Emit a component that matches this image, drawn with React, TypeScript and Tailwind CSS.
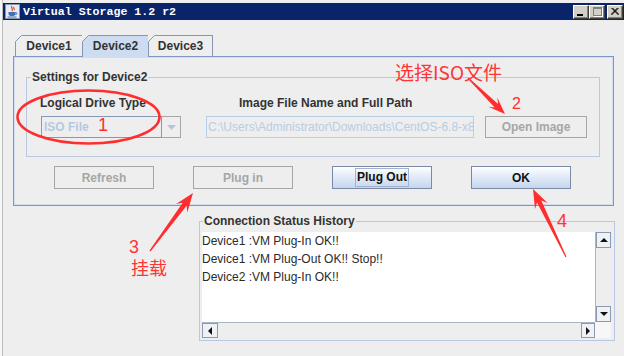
import React from 'react'

type Pt = [number, number]

// tapered annotation arrow, tail -> tip
function arrowPoints(tail: Pt, tip: Pt, head = 18, hw = 7, tw = 0.6, sw = 2.4) {
  const [x1, y1] = tail
  const [x2, y2] = tip
  const len = Math.hypot(x2 - x1, y2 - y1)
  const ux = (x2 - x1) / len
  const uy = (y2 - y1) / len
  const px = -uy
  const py = ux
  const bx = x2 - ux * head
  const by = y2 - uy * head
  const nx = x2 - ux * (head - 5)
  const ny = y2 - uy * (head - 5)
  const pts: Pt[] = [
    [x1 + px * tw, y1 + py * tw],
    [nx + px * sw, ny + py * sw],
    [bx + px * hw, by + py * hw],
    [x2, y2],
    [bx - px * hw, by - py * hw],
    [nx - px * sw, ny - py * sw],
    [x1 - px * tw, y1 - py * tw],
  ]
  return pts.map((p) => p.map((v) => v.toFixed(1)).join(',')).join(' ')
}

function JavaIcon() {
  return (
    <svg width="15" height="15" viewBox="0 0 15 15">
      <rect x="0.5" y="0.5" width="14" height="14" fill="#e8ecf4" stroke="#8a94a8" />
      <path d="M7 2 C5 4 9 5 7 7 M9 3 C8 4 10 5 9 6" stroke="#e2461c" strokeWidth="1.2" fill="none" />
      <path d="M3.5 8 H10.5 V10 C10.5 11.5 9 12 7 12 C5 12 3.5 11.5 3.5 10 Z" fill="#3f6fb5" />
      <path d="M10.5 8.5 C12.5 8.5 12.5 10.5 10.5 10.5" stroke="#3f6fb5" fill="none" />
      <rect x="2.5" y="12.5" width="9" height="1" fill="#3f6fb5" />
    </svg>
  )
}

function WinButton({ kind }: { kind: 'min' | 'max' | 'close' }) {
  return (
    <div className="w-[16px] h-[14px] bg-[#d4d0c8] border border-t-white border-l-white border-b-[#404040] border-r-[#404040] shadow-[inset_-1px_-1px_#808080] flex items-center justify-center">
      {kind === 'min' && <div className="w-[6px] h-[2px] bg-black mt-[6px] -ml-[2px]" />}
      {kind === 'max' && (
        <div className="w-[9px] h-[9px] border border-[#808080] border-t-2 shadow-[1px_1px_#ffffff]" />
      )}
      {kind === 'close' && (
        <svg width="8" height="7" viewBox="0 0 8 7">
          <path d="M0.5 0 L7.5 7 M1.5 0 L8 6.5 M7.5 0 L0.5 7 M6.5 0 L0 6.5" stroke="#000" strokeWidth="1" />
        </svg>
      )}
    </div>
  )
}

function Tab({ label, width, selected, last }: { label: string; width: string; selected?: boolean; last?: boolean }) {
  return (
    <div
      className={`relative ${width} border-t border-l border-[#8797b3] ${last ? 'border-r' : ''} ${
        selected ? 'h-[22px] -mb-px z-10 bg-[#cedcf2]' : 'h-[21px] bg-[#eeeeee]'
      } flex justify-center pt-[3px] font-bold text-[#333333] leading-[14px]`}
    >
      <svg className="absolute -left-px -top-px" width="7" height="7" viewBox="0 0 7 7">
        <polygon points="0,0 7,0 0,7" fill="#eeeeee" />
        <line x1="0.5" y1="6.5" x2="6.5" y2="0.5" stroke="#8797b3" />
      </svg>
      {label}
    </div>
  )
}

function PushButton({ label, enabled, focused }: { label: string; enabled?: boolean; focused?: boolean }) {
  if (!enabled) {
    return (
      <div className="w-[100px] h-[23px] border border-[#a6a6a6] bg-[#eeeeee] flex items-center justify-center font-bold text-[#a6a6a6]">
        {label}
      </div>
    )
  }
  return (
    <div className="w-[100px] h-[23px] border border-[#7a8aa6] bg-[linear-gradient(to_bottom,#ffffff,#e8eff9_35%,#c5d6ee)] flex items-center justify-center font-bold text-[#111111]">
      <span className={focused ? 'border border-[#a3b3cd] px-[1px] leading-[17px]' : ''}>{label}</span>
    </div>
  )
}

function Tri({ dir }: { dir: 'up' | 'down' | 'left' | 'right' }) {
  if (dir === 'up')
    return (
      <svg width="8" height="4" viewBox="0 0 8 4">
        <polygon points="0,4 8,4 4,0" fill="#111" />
      </svg>
    )
  if (dir === 'down')
    return (
      <svg width="8" height="4" viewBox="0 0 8 4">
        <polygon points="0,0 8,0 4,4" fill="#111" />
      </svg>
    )
  if (dir === 'left')
    return (
      <svg width="4" height="8" viewBox="0 0 4 8">
        <polygon points="4,0 4,8 0,4" fill="#111" />
      </svg>
    )
  return (
    <svg width="4" height="8" viewBox="0 0 4 8">
      <polygon points="0,0 0,8 4,4" fill="#111" />
    </svg>
  )
}

const history = ['Device1 :VM Plug-In OK!!', 'Device1 :VM Plug-Out OK!! Stop!!', 'Device2 :VM Plug-In OK!!']

export default function App() {
  return (
    <div className="relative w-[624px] h-[356px] overflow-hidden bg-[#eeeeee] flex font-['Liberation_Sans',Arial,sans-serif] text-[12px] text-[#333333]">
      {/* window frame, left */}
      <div className="w-[2px] bg-[#f6f6f6]" />
      <div className="w-[1px] bg-[#bcbcbc]" />

      <div className="flex-1 flex flex-col pt-[3px]">
        {/* title bar */}
        <div className="h-[17px] bg-[#0a246a] flex items-center pl-[2px] pr-[1px]">
          <JavaIcon />
          <span className="ml-[3px] font-['Liberation_Mono',monospace] font-bold text-[11.6px] text-white leading-none whitespace-pre">
            Virtual Storage 1.2 r2
          </span>
          <div className="ml-auto flex">
            <WinButton kind="min" />
            <WinButton kind="max" />
            <div className="w-[2px]" />
            <WinButton kind="close" />
          </div>
        </div>

        <div className="flex flex-col pl-[10px] pt-[15px]">
          {/* tabs */}
          <div className="flex items-end ml-[2px]">
            <Tab label="Device1" width="w-[67px]" />
            <Tab label="Device2" width="w-[66px]" selected />
            <Tab label="Device3" width="w-[65px]" last />
          </div>

          {/* tab content */}
          <div className="w-[601px] h-[150px] border border-[#7f95c4] shadow-[inset_0_0_0_1px_#d3ddef] flex flex-col">
            <fieldset className="ml-[12px] mt-[13px] w-[574px] h-[87px] border border-[#b8c8e2]">
              <legend className="ml-[4px] px-[1px] font-bold leading-[14px] text-[#333333]">Settings for Device2</legend>
              <div className="flex pl-[14px] pt-[12px]">
                <div className="w-[140px] flex flex-col gap-[6px]">
                  <div className="font-bold leading-[14px] -ml-px">Logical Drive Type</div>
                  <div className="flex h-[22px]">
                    <div className="w-[121px] border border-[#8598b6] bg-[#eeeeee] pl-[2px] flex items-center font-bold text-[#b5c8e2]">
                      ISO File
                    </div>
                    <div className="w-[19px] border border-l-0 border-[#a6a6a6] bg-[#eeeeee] flex items-center justify-center">
                      <svg width="9" height="5" viewBox="0 0 9 5">
                        <polygon points="0,0 9,0 4.5,5" fill="#b3c5dc" />
                      </svg>
                    </div>
                  </div>
                </div>
                <div className="w-[268px] ml-[25px] flex flex-col gap-[6px]">
                  <div className="font-bold leading-[14px] pl-[33px]">Image File Name and Full Path</div>
                  <div className="h-[22px] border border-[#b8cde6] bg-[#eeeeee] px-[1px] flex items-center overflow-hidden whitespace-nowrap text-[#b8cce4]">
                    {'C:\\Users\\Administrator\\Downloads\\CentOS-6.8-x86_64-bin-DVD1.iso'}
                  </div>
                </div>
                <div className="w-[102px] ml-[11px] flex flex-col gap-[6px]">
                  <div className="h-[14px]" />
                  <div className="h-[22px] border border-[#a6a6a6] bg-[#eeeeee] flex items-center justify-center font-bold text-[#a6a6a6]">
                    Open Image
                  </div>
                </div>
              </div>
            </fieldset>

            <div className="flex gap-[39px] ml-[40px] mt-[9px]">
              <PushButton label="Refresh" />
              <PushButton label="Plug in" />
              <PushButton label="Plug Out" enabled focused />
              <PushButton label="OK" enabled />
            </div>
          </div>

          {/* status history */}
          <fieldset className="ml-[186px] mt-[8px] w-[416px] h-[127px] border border-[#b8c8e2]">
            <legend className="ml-[3px] px-[1px] font-bold leading-[14px] text-[#333333]">Connection Status History</legend>
            <div className="ml-[2px] mt-[4px] w-[409px] h-[106px] flex flex-col">
              <div className="flex h-[90px]">
                <div className="w-[393px] bg-white leading-[18px] text-[#2a2a2a]">
                  {history.map((h, i) => (
                    <div key={i} className="whitespace-pre">
                      {h}
                    </div>
                  ))}
                </div>
                <div className="w-[16px] flex flex-col bg-[#eeeeee] border-l border-[#a9b5c7]">
                  <div className="h-[16px] border border-[#8c9ab0] bg-[#eef1f6] flex items-center justify-center">
                    <Tri dir="up" />
                  </div>
                  <div className="flex-1" />
                  <div className="h-[16px] border border-[#8c9ab0] bg-[#eef1f6] flex items-center justify-center">
                    <Tri dir="down" />
                  </div>
                </div>
              </div>
              <div className="flex h-[16px]">
                <div className="w-[393px] flex bg-[#eeeeee] border-t border-[#a9b5c7]">
                  <div className="w-[16px] border border-[#8c9ab0] bg-[#eef1f6] flex items-center justify-center">
                    <Tri dir="left" />
                  </div>
                  <div className="flex-1" />
                  <div className="w-[14px] border border-[#8c9ab0] bg-[#eef1f6] flex items-center justify-center">
                    <Tri dir="right" />
                  </div>
                </div>
                <div className="w-[16px] bg-[#f7f7f7]" />
              </div>
            </div>
          </fieldset>
        </div>
      </div>

      {/* red annotations drawn over the screenshot */}
      <svg className="absolute left-0 top-0 pointer-events-none" width="624" height="356" viewBox="0 0 624 356">
        <ellipse cx="88.5" cy="117" rx="71" ry="26.5" fill="none" stroke="#ff2e2e" strokeWidth="2.6" />
        <polygon points={arrowPoints([468, 78], [505, 114], 17, 6.5)} fill="#ff2e2e" />
        <polygon points={arrowPoints([150, 251], [193, 193], 19, 7)} fill="#ff2e2e" />
        <polygon points={arrowPoints([566, 257], [533, 189], 19, 7)} fill="#ff2e2e" />
      </svg>
      <span className="absolute left-[98px] top-[116px] text-[18px] leading-none text-[#ff2e2e]">1</span>
      <span className="absolute left-[395px] top-[62px] font-['Noto_Sans_CJK_SC',sans-serif] text-[19px] leading-none text-[#ff3535] whitespace-pre">
        选择ISO文件
      </span>
      <span className="absolute left-[512px] top-[96px] text-[16px] leading-none text-[#ff2e2e]">2</span>
      <span className="absolute left-[129px] top-[238px] text-[18px] leading-none text-[#ff3535]">3</span>
      <span className="absolute left-[131px] top-[258px] font-['Noto_Sans_CJK_SC',sans-serif] text-[18px] leading-none text-[#ff3535]">
        挂载
      </span>
      <span className="absolute left-[557px] top-[212px] text-[18px] leading-none text-[#ff3535]">4</span>
    </div>
  )
}
